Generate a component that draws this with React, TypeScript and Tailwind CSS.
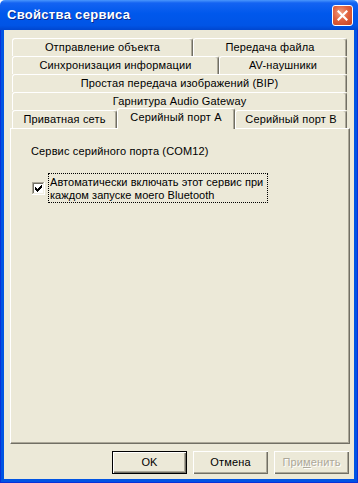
import React from "react";

function Tab({ label, className = "" }: { label: string; className?: string }) {
  return (
    <div
      className={
        "h-[18px] shrink-0 flex items-center justify-center border-t border-l border-white border-r border-r-[#716F64] rounded-t-[3px] shadow-[inset_-1px_0_#ACA899] text-[11px] leading-[13px] tracking-[0.15px] whitespace-nowrap " +
        className
      }
    >
      {label}
    </div>
  );
}

function CheckMark() {
  const px: [number, number][] = [
    [9, 3],
    [8, 4], [9, 4],
    [3, 5], [7, 5], [8, 5], [9, 5],
    [3, 6], [4, 6], [6, 6], [7, 6], [8, 6],
    [3, 7], [4, 7], [5, 7], [6, 7], [7, 7],
    [4, 8], [5, 8], [6, 8],
    [5, 9],
  ];
  return (
    <svg width="13" height="13" viewBox="0 0 13 13" shapeRendering="crispEdges">
      <rect x="0" y="0" width="13" height="13" fill="#FFFFFF" />
      <rect x="0" y="0" width="12" height="1" fill="#ACA899" />
      <rect x="0" y="0" width="1" height="12" fill="#ACA899" />
      <rect x="1" y="1" width="10" height="1" fill="#716F64" />
      <rect x="1" y="1" width="1" height="10" fill="#716F64" />
      <rect x="0" y="12" width="13" height="1" fill="#FFFFFF" />
      <rect x="12" y="0" width="1" height="13" fill="#FFFFFF" />
      <rect x="1" y="11" width="11" height="1" fill="#F1EFE2" />
      <rect x="11" y="1" width="1" height="11" fill="#F1EFE2" />
      {px.map(([x, y]) => (
        <rect key={`${x}-${y}`} x={x} y={y} width="1" height="1" fill="#000" />
      ))}
    </svg>
  );
}

function CloseButton() {
  return (
    <div className="w-[21px] h-[21px] rounded-[3px] border border-white bg-[radial-gradient(circle_at_40%_35%,#F0A183_0%,#E1623F_45%,#C8411E_100%)] flex items-center justify-center">
      <svg width="11" height="11" viewBox="0 0 11 11">
        <path d="M1.5 1.5 L9.5 9.5 M9.5 1.5 L1.5 9.5" stroke="#FFFFFF" strokeWidth="2.2" strokeLinecap="square" />
      </svg>
    </div>
  );
}

const btn =
  "w-[75px] h-[23px] flex items-center justify-center text-[11px] leading-[13px] tracking-[0.15px] bg-[#ECE9D8]";

export default function App() {
  return (
    <div className="w-[358px] h-[483px] flex flex-col font-['Liberation_Sans',Arial,sans-serif] text-black overflow-hidden">
      <div className="h-[30px] shrink-0 flex items-center pl-[7px] pr-[5px] rounded-t-[5px] bg-[linear-gradient(180deg,#4A96FC_0%,#1463F2_10%,#0058EC_45%,#0054E6_85%,#0046CF_100%)]">
        <span className="flex-1 text-white font-bold text-[13px] tracking-[0.3px] [text-shadow:1px_1px_0_#0B2A8C]">
          Свойства сервиса
        </span>
        <CloseButton />
      </div>
      <div className="flex-1 flex flex-col bg-[#0054E3] px-[4px] pb-[4px] shadow-[inset_1px_0_#0831D9,inset_-1px_0_#0831D9,inset_0_-1px_#0831D9]">
        <div className="flex-1 bg-[#ECE9D8] flex flex-col pt-[8px]">
          <div className="flex flex-col ml-[8px]">
            <div className="flex">
              <Tab label="Отправление объекта" className="w-[181px]" />
              <Tab label="Передача файла" className="w-[154px]" />
            </div>
            <div className="flex">
              <Tab label="Синхронизация информации" className="w-[207px]" />
              <Tab label="AV-наушники" className="w-[128px]" />
            </div>
            <div className="flex">
              <Tab label="Простая передача изображений (BIP)" className="w-[335px]" />
            </div>
            <div className="flex">
              <Tab label="Гарнитура Audio Gateway" className="w-[335px]" />
            </div>
            <div className="flex items-end h-[18px]">
              <Tab label="Приватная сеть" className="w-[105px]" />
              <div className="relative z-10 w-[118px] h-[21px] -mb-[1px] shrink-0 flex items-center justify-center pb-[3px] bg-[#ECE9D8] border-t border-l border-white border-r border-r-[#716F64] rounded-t-[3px] shadow-[inset_-1px_0_#ACA899] text-[11px] leading-[13px] tracking-[0.15px] whitespace-nowrap">
                Серийный порт A
              </div>
              <Tab label="Серийный порт B" className="w-[112px]" />
            </div>
          </div>

          <div className="ml-[6px] w-[340px] h-[316px] shrink-0 border-t border-l border-white border-r border-b border-r-[#716F64] border-b-[#716F64] shadow-[inset_-1px_-1px_#ACA899] pl-[20px] pt-[16px] flex flex-col">
            <div className="text-[11px] leading-[13px] tracking-[0.15px] whitespace-nowrap">
              Сервис серийного порта (COM12)
            </div>
            <div className="flex items-start mt-[15px]">
              <div className="ml-[1px] mt-[9px] w-[13px] h-[13px] shrink-0">
                <CheckMark />
              </div>
              <div className="ml-[3px] w-[220px] h-[30px] border border-dotted border-black pl-[1px] pt-[2px] text-[11px] leading-[13px] tracking-[0.05px] whitespace-nowrap">
                Автоматически включать этот сервис при
                <br />
                каждом запуске моего Bluetooth
              </div>
            </div>
          </div>

          <div className="flex justify-end gap-[6px] pr-[5px] mt-[7px]">
            <div className={btn + " border border-black shadow-[inset_1px_1px_#FFFFFF,inset_-1px_-1px_#716F64,inset_-2px_-2px_#ACA899]"}>
              OK
            </div>
            <div className={btn + " shadow-[inset_1px_1px_#FFFFFF,inset_-1px_-1px_#716F64,inset_-2px_-2px_#ACA899]"}>
              Отмена
            </div>
            <div className={btn + " text-[#ACA899] [text-shadow:1px_1px_0_#FFFFFF] shadow-[inset_1px_1px_#FFFFFF,inset_-1px_-1px_#716F64,inset_-2px_-2px_#ACA899]"}>
              При<span className="underline">м</span>енить
            </div>
          </div>
        </div>
      </div>
    </div>
  );
}
